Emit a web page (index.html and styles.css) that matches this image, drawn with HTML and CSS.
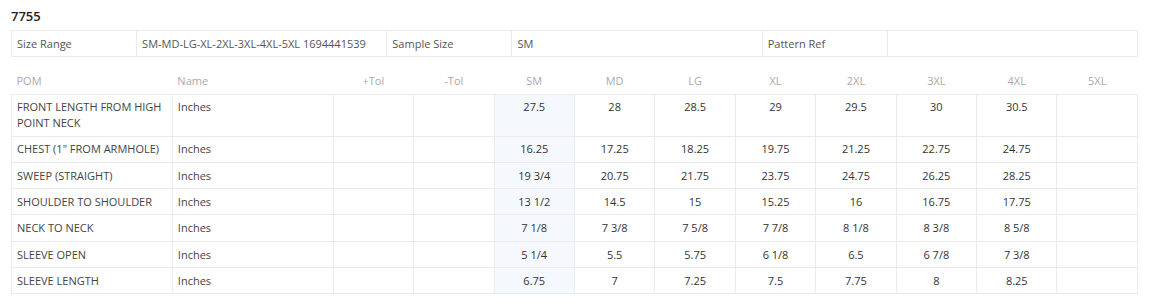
FILE: index.html
```html
<!DOCTYPE html>
<html>
<head>
<meta charset="utf-8">
<link rel="stylesheet" href="styles.css">
</head>
<body>
<div class="page">
  <div class="title">7755</div>
  <table class="info">
    <colgroup><col class="c1"><col class="c2"><col class="c1"><col class="c2"><col class="c1"><col class="c2"></colgroup>
    <tr>
      <td>Size Range</td>
      <td>SM-MD-LG-XL-2XL-3XL-4XL-5XL 1694441539</td>
      <td>Sample Size</td>
      <td>SM</td>
      <td>Pattern Ref</td>
      <td></td>
    </tr>
  </table>
  <table class="spec">
    <colgroup>
      <col class="w2"><col class="w2"><col class="w1"><col class="w1">
      <col class="w1"><col class="w1"><col class="w1"><col class="w1"><col class="w1"><col class="w1"><col class="w1"><col class="w1">
    </colgroup>
    <thead>
      <tr>
        <th class="left">POM</th><th class="left">Name</th><th>+Tol</th><th>-Tol</th>
        <th>SM</th><th>MD</th><th>LG</th><th>XL</th><th>2XL</th><th>3XL</th><th>4XL</th><th>5XL</th>
      </tr>
    </thead>
    <tbody>
      <tr><td class="left">FRONT LENGTH FROM HIGH POINT NECK</td><td class="left">Inches</td><td></td><td></td><td class="sample">27.5</td><td>28</td><td>28.5</td><td>29</td><td>29.5</td><td>30</td><td>30.5</td><td></td></tr>
      <tr><td class="left">CHEST (1" FROM ARMHOLE)</td><td class="left">Inches</td><td></td><td></td><td class="sample">16.25</td><td>17.25</td><td>18.25</td><td>19.75</td><td>21.25</td><td>22.75</td><td>24.75</td><td></td></tr>
      <tr><td class="left">SWEEP (STRAIGHT)</td><td class="left">Inches</td><td></td><td></td><td class="sample">19 3/4</td><td>20.75</td><td>21.75</td><td>23.75</td><td>24.75</td><td>26.25</td><td>28.25</td><td></td></tr>
      <tr><td class="left">SHOULDER TO SHOULDER</td><td class="left">Inches</td><td></td><td></td><td class="sample">13 1/2</td><td>14.5</td><td>15</td><td>15.25</td><td>16</td><td>16.75</td><td>17.75</td><td></td></tr>
      <tr><td class="left">NECK TO NECK</td><td class="left">Inches</td><td></td><td></td><td class="sample">7 1/8</td><td>7 3/8</td><td>7 5/8</td><td>7 7/8</td><td>8 1/8</td><td>8 3/8</td><td>8 5/8</td><td></td></tr>
      <tr><td class="left">SLEEVE OPEN</td><td class="left">Inches</td><td></td><td></td><td class="sample">5 1/4</td><td>5.5</td><td>5.75</td><td>6 1/8</td><td>6.5</td><td>6 7/8</td><td>7 3/8</td><td></td></tr>
      <tr><td class="left">SLEEVE LENGTH</td><td class="left">Inches</td><td></td><td></td><td class="sample">6.75</td><td>7</td><td>7.25</td><td>7.5</td><td>7.75</td><td>8</td><td>8.25</td><td></td></tr>
    </tbody>
  </table>
</div>
</body>
</html>
```

FILE: styles.css
```css
html, body {
  margin: 0;
  padding: 0;
  background: #fff;
}

body {
  font-family: "Open Sans", "Liberation Sans", sans-serif;
  font-size: 11px;
  color: #444;
}

.page {
  padding: 7px 15px 0 11px;
}

.title {
  font-size: 13px;
  font-weight: 600;
  line-height: 18px;
  color: #222;
  margin-bottom: 5px;
}

table {
  width: 100%;
  border-collapse: collapse;
  table-layout: fixed;
}

td, th {
  line-height: 15.7px;
  padding: 4.8px 5px;
  text-align: center;
  vertical-align: top;
  font-weight: 400;
}

.info td {
  border: 1px solid #ebebeb;
  text-align: left;
  color: #555;
}

.info .c1 { width: 11.111%; }
.info .c2 { width: 22.222%; }

.spec {
  margin-top: 11px;
}

.spec .w2 { width: 14.2857%; }
.spec .w1 { width: 7.14286%; }

.spec th {
  color: #aaa;
  border-bottom: 1px solid #ebebeb;
}

.spec td {
  border: 1px solid #ebebeb;
  color: #333;
}

.spec .left {
  text-align: left;
}

.spec td.left {
  color: #444;
}

.spec td.sample {
  background: #f5f8fc;
}
```
